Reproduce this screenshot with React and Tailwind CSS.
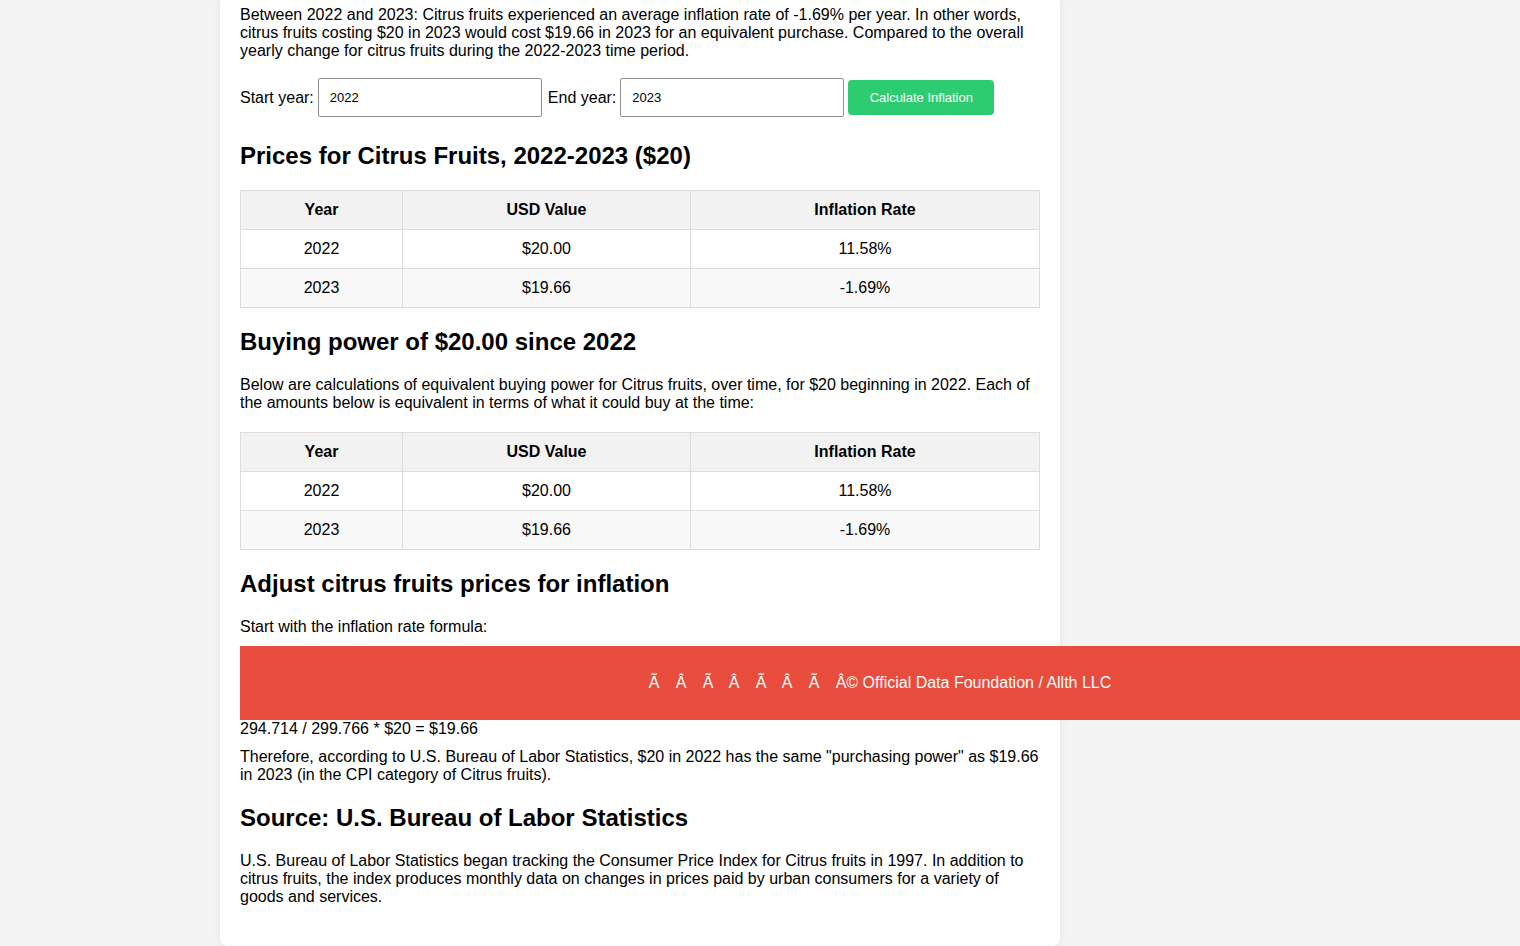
export default function App() {
  const rows = [
    { year: '2022', usd: '$20.00', rate: '11.58%' },
    { year: '2023', usd: '$19.66', rate: '-1.69%' },
  ];

  const PriceTable = () => (
    <table className="w-[800px] border-collapse text-center">
      <thead>
        <tr className="bg-[#f2f2f2]">
          <th className="w-[162px] h-[39px] border border-[#dddddd] font-bold">Year</th>
          <th className="w-[288px] h-[39px] border border-[#dddddd] font-bold">USD Value</th>
          <th className="h-[39px] border border-[#dddddd] font-bold">Inflation Rate</th>
        </tr>
      </thead>
      <tbody>
        {rows.map((r, i) => (
          <tr key={r.year} className={i % 2 === 1 ? 'bg-[#f9f9f9]' : 'bg-white'}>
            <td className="h-[39px] border border-[#dddddd]">{r.year}</td>
            <td className="h-[39px] border border-[#dddddd]">{r.usd}</td>
            <td className="h-[39px] border border-[#dddddd]">{r.rate}</td>
          </tr>
        ))}
      </tbody>
    </table>
  );

  return (
    <div className="min-h-screen bg-[#f4f4f4] text-black text-[16px] leading-[18px] font-['Liberation_Sans',Arial,Helvetica,sans-serif]">
      <div className="ml-[220px] w-[840px] bg-white rounded-b-[8px] shadow-[0_0_8px_rgba(0,0,0,0.08)] px-[20px] pt-[6px] pb-[40px]">
        <p>
          Between 2022 and 2023: Citrus fruits experienced an average inflation rate of -1.69% per year. In other words,
          citrus fruits costing $20 in 2023 would cost $19.66 in 2023 for an equivalent purchase. Compared to the overall
          yearly change for citrus fruits during the 2022-2023 time period.
        </p>

        {/* Calculator form */}
        <form className="mt-[18px] flex items-center h-[39px]">
          <label className="mr-[4px]">Start year:</label>
          <input
            type="text"
            defaultValue="2022"
            className="w-[224px] h-[39px] px-[11px] text-[13px] border border-[#8f8f8f] rounded-[2px] bg-white"
          />
          <label className="ml-[6px] mr-[4px]">End year:</label>
          <input
            type="text"
            defaultValue="2023"
            className="w-[224px] h-[39px] px-[11px] text-[13px] border border-[#8f8f8f] rounded-[2px] bg-white"
          />
          <button
            type="button"
            className="ml-[4px] w-[146px] h-[35px] bg-[#2ecc71] text-white text-[13px] rounded-[4px]"
          >
            Calculate Inflation
          </button>
        </form>

        <h2 className="mt-[25px] mb-[20px] text-[24px] leading-[28px] font-bold">Prices for Citrus Fruits, 2022-2023 ($20)</h2>
        <PriceTable />

        <h2 className="mt-[20px] mb-[20px] text-[24px] leading-[28px] font-bold">Buying power of $20.00 since 2022</h2>
        <p>
          Below are calculations of equivalent buying power for Citrus fruits, over time, for $20 beginning in 2022. Each of
          the amounts below is equivalent in terms of what it could buy at the time:
        </p>
        <div className="mt-[20px]">
          <PriceTable />
        </div>

        <h2 className="mt-[20px] mb-[20px] text-[24px] leading-[28px] font-bold">Adjust citrus fruits prices for inflation</h2>
        <p>Start with the inflation rate formula:</p>
        <div className="h-[84px] flex flex-col justify-center gap-[10px]">
          <p>CPI in 2023 / CPI in 2022 * 2022 USD value = 2023 USD value</p>
          <p>Then plug in historical CPI values:</p>
        </div>
        <p>294.714 / 299.766 * $20 = $19.66</p>
        <p className="mt-[10px]">
          Therefore, according to U.S. Bureau of Labor Statistics, $20 in 2022 has the same "purchasing power" as $19.66
          in 2023 (in the CPI category of Citrus fruits).
        </p>

        <h2 className="mt-[20px] mb-[20px] text-[24px] leading-[28px] font-bold">Source: U.S. Bureau of Labor Statistics</h2>
        <p>
          U.S. Bureau of Labor Statistics began tracking the Consumer Price Index for Citrus fruits in 1997. In addition to
          citrus fruits, the index produces monthly data on changes in prices paid by urban consumers for a variety of
          goods and services.
        </p>
      </div>

      {/* Fixed footer overlay */}
      <div className="fixed left-[240px] right-0 top-[646px] h-[74px] bg-[#e74c3c] text-white flex items-center justify-center">
        <span className="w-[27px]">Ã</span>
        <span className="w-[27px]">Â</span>
        <span className="w-[26px]">Ã</span>
        <span className="w-[27px]">Â</span>
        <span className="w-[26px]">Ã</span>
        <span className="w-[27px]">Â</span>
        <span className="w-[27px]">Ã</span>
        <span>Â© Official Data Foundation / Allth LLC</span>
      </div>
    </div>
  );
}
